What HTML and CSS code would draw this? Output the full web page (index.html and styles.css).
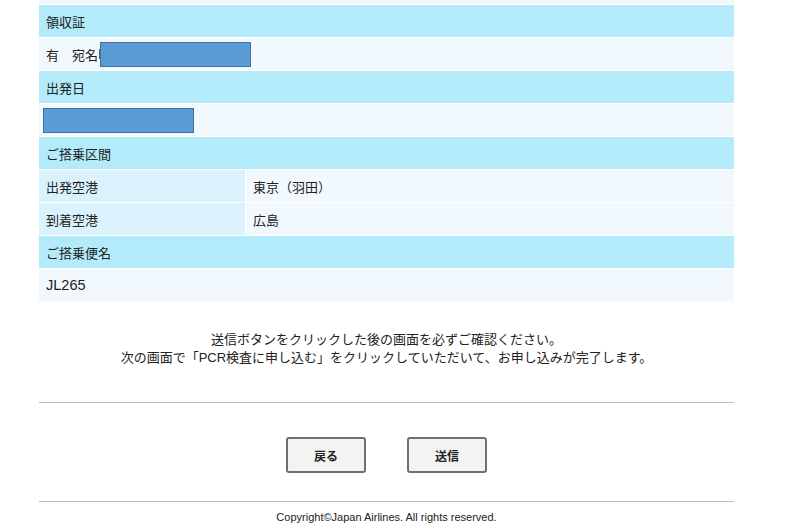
FILE: index.html
```html
<!DOCTYPE html>
<html lang="ja">
<head>
<meta charset="utf-8">
<link rel="stylesheet" href="styles.css">
</head>
<body>
<div class="page">
  <div class="form">
    <div class="row stub"></div>
    <div class="row head">領収証</div>
    <div class="row body"><span>有</span><span class="gap"></span><span>宛名</span><span class="caret"></span><span class="redact r1"></span></div>
    <div class="row head">出発日</div>
    <div class="row body tight"><span class="redact r2"></span></div>
    <div class="row head">ご搭乗区間</div>
    <div class="row split"><div class="label">出発空港</div><div class="value">東京（羽田）</div></div>
    <div class="row split"><div class="label">到着空港</div><div class="value">広島</div></div>
    <div class="row head">ご搭乗便名</div>
    <div class="row body latin">JL265</div>
  </div>
  <div class="notice">
    <p>送信ボタンをクリックした後の画面を必ずご確認ください。</p>
    <p>次の画面で「PCR検査に申し込む」をクリックしていただいて、お申し込みが完了します。</p>
  </div>
  <div class="rule"></div>
  <div class="buttons">
    <button class="btn">戻る</button>
    <button class="btn">送信</button>
  </div>
  <div class="rule"></div>
  <div class="copy">Copyright©Japan Airlines. All rights reserved.</div>
</div>
</body>
</html>
```
FILE: styles.css
```css
html, body {
  margin: 0;
  padding: 0;
  background: #ffffff;
}
body {
  font-family: "Liberation Sans", "Noto Sans CJK JP", sans-serif;
  color: #222;
}
.page {
  width: 695px;
  margin-left: 39px;
}
.form {
  display: flex;
  flex-direction: column;
  gap: 1px;
}
.row {
  height: 32px;
  display: flex;
  align-items: center;
  font-size: 13px;
  box-sizing: border-box;
}
.latin {
  font-size: 14.5px;
}
.stub {
  height: 4px;
  background: #f1f9fe;
}
.head {
  background: #b3ebfb;
  padding-left: 7px;
}
.body {
  background: #f1f9fe;
  padding-left: 7px;
}
.body.tight {
  padding-left: 4px;
}
.gap {
  width: 13px;
}
.caret {
  width: 2px;
  height: 10px;
  background: #666;
  margin-left: 1px;
}
.redact {
  display: block;
  height: 25px;
  background: #5b9bd5;
  border: 1px solid #41719c;
  box-sizing: border-box;
}
.r1 {
  width: 151px;
  margin-left: -1px;
}
.r2 {
  width: 151px;
}
.split {
  gap: 1px;
}
.split .label {
  width: 206px;
  height: 100%;
  background: #d9f2fc;
  display: flex;
  align-items: center;
  padding-left: 7px;
  box-sizing: border-box;
}
.split .value {
  flex: 1;
  height: 100%;
  background: #f1f9fe;
  display: flex;
  align-items: center;
  padding-left: 7px;
}
.notice {
  margin-top: 30px;
  text-align: center;
  font-size: 13px;
  line-height: 18px;
}
.notice p {
  margin: 0;
}
.rule {
  height: 1px;
  background: #bdbdbd;
}
.notice + .rule {
  margin-top: 35px;
}
.buttons {
  display: flex;
  justify-content: center;
  gap: 41px;
  padding: 34px 0 28px;
}
.btn {
  width: 80px;
  height: 36px;
  border: 2px solid #707070;
  border-radius: 3px;
  background: #f3f3f3;
  font-family: "Liberation Sans", "Noto Sans CJK JP", sans-serif;
  font-size: 12px;
  font-weight: bold;
  color: #222;
  padding: 0;
}
.copy {
  text-align: center;
  font-size: 11px;
  margin-top: 9px;
  color: #222;
}
```
